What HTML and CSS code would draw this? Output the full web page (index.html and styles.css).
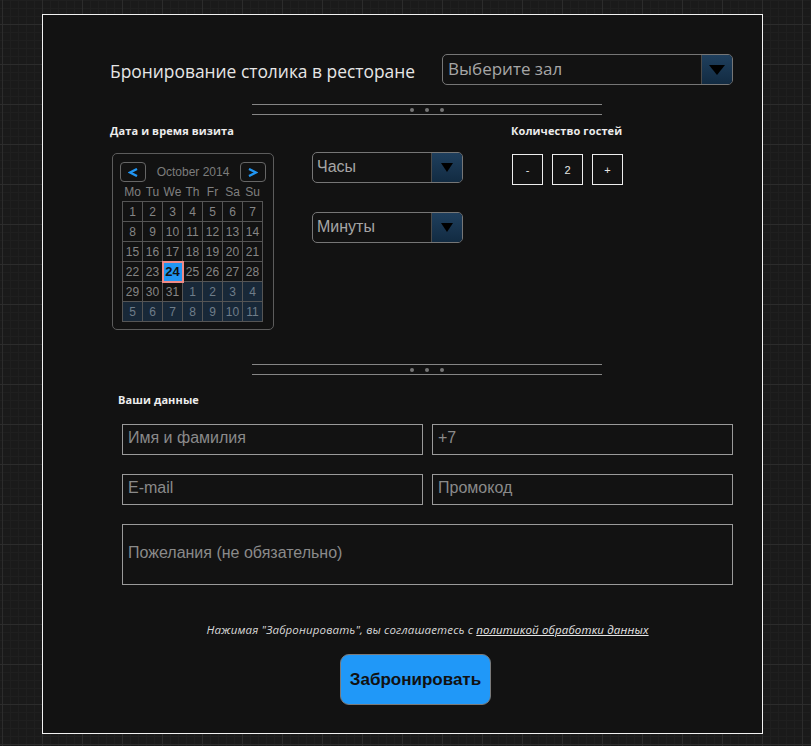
FILE: index.html
```html
<!DOCTYPE html>
<html lang="ru">
<head>
<meta charset="utf-8">
<title>Бронирование столика</title>
<link rel="stylesheet" href="styles.css">
</head>
<body>
<div class="panel">
  <div class="header">
    <h1 class="title">Бронирование столика в ресторане</h1>
    <div class="select select-hall">
      <span class="select-text">Выберите зал</span>
      <span class="select-arrow"><svg width="16" height="10" viewBox="0 0 16 10"><polygon points="0,0 16,0 8,10" fill="#000"/></svg></span>
    </div>
  </div>

  <div class="sep"><i></i><i></i><i></i></div>

  <div class="visit">
    <div class="col col-date">
      <div class="label">Дата и время визита</div>
      <div class="calendar">
        <div class="cal-head">
          <span class="cal-nav"><svg width="10" height="9" viewBox="0 0 10 9"><polyline points="9,1 2,4.5 9,8" fill="none" stroke="#2196f3" stroke-width="2.4" stroke-linejoin="miter"/></svg></span>
          <span class="cal-month">October 2014</span>
          <span class="cal-nav"><svg width="10" height="9" viewBox="0 0 10 9"><polyline points="1,1 8,4.5 1,8" fill="none" stroke="#2196f3" stroke-width="2.4" stroke-linejoin="miter"/></svg></span>
        </div>
        <table class="cal-table">
          <thead>
            <tr><th>Mo</th><th>Tu</th><th>We</th><th>Th</th><th>Fr</th><th>Sa</th><th>Su</th></tr>
          </thead>
          <tbody>
            <tr><td>1</td><td>2</td><td>3</td><td>4</td><td>5</td><td>6</td><td>7</td></tr>
            <tr><td>8</td><td>9</td><td>10</td><td>11</td><td>12</td><td>13</td><td>14</td></tr>
            <tr><td>15</td><td>16</td><td>17</td><td>18</td><td>19</td><td>20</td><td>21</td></tr>
            <tr><td>22</td><td>23</td><td class="sel">24</td><td>25</td><td>26</td><td>27</td><td>28</td></tr>
            <tr><td>29</td><td>30</td><td>31</td><td class="next">1</td><td class="next">2</td><td class="next">3</td><td class="next">4</td></tr>
            <tr><td class="next">5</td><td class="next">6</td><td class="next">7</td><td class="next">8</td><td class="next">9</td><td class="next">10</td><td class="next">11</td></tr>
          </tbody>
        </table>
      </div>
    </div>
    <div class="col col-time">
      <div class="select select-small">
        <span class="select-text plain">Часы</span>
        <span class="select-arrow"><svg width="12" height="9" viewBox="0 0 12 9"><polygon points="0,0 12,0 6,9" fill="#000"/></svg></span>
      </div>
      <div class="select select-small minutes">
        <span class="select-text plain">Минуты</span>
        <span class="select-arrow"><svg width="12" height="9" viewBox="0 0 12 9"><polygon points="0,0 12,0 6,9" fill="#000"/></svg></span>
      </div>
    </div>
    <div class="col col-guests">
      <div class="label">Количество гостей</div>
      <div class="counter">
        <span class="cbox">-</span>
        <span class="cbox">2</span>
        <span class="cbox">+</span>
      </div>
    </div>
  </div>

  <div class="sep sep-second"><i></i><i></i><i></i></div>

  <div class="data">
    <div class="label label-data">Ваши данные</div>
    <form class="form">
      <div class="fields">
        <input class="field" type="text" placeholder="Имя и фамилия">
        <input class="field" type="text" placeholder="+7">
        <input class="field" type="text" placeholder="E-mail">
        <input class="field" type="text" placeholder="Промокод">
      </div>
      <textarea class="wishes" placeholder="Пожелания (не обязательно)"></textarea>
      <p class="agree">Нажимая "Забронировать", вы соглашаетесь с <a href="#">политикой обработки данных</a></p>
      <button class="submit" type="button">Забронировать</button>
    </form>
  </div>
</div>
</body>
</html>
```

FILE: styles.css
```css
html, body {
  margin: 0;
  padding: 0;
}
body {
  width: 811px;
  height: 746px;
  overflow: hidden;
  background-color: #1a1a1a;
  background-image:
    linear-gradient(90deg, #2c2c2c 1px, transparent 1px),
    linear-gradient(180deg, #2c2c2c 1px, transparent 1px),
    linear-gradient(90deg, #1f1f1f 1px, transparent 1px),
    linear-gradient(180deg, #1f1f1f 1px, transparent 1px);
  background-size: 40px 40px, 40px 40px, 8px 8px, 8px 8px;
  background-position: 2px 24px, 2px 24px, 2px 0, 0 0;
  font-family: "Liberation Sans", Arial, sans-serif;
}

.panel {
  box-sizing: border-box;
  width: 721px;
  height: 720px;
  margin: 14px 0 0 42px;
  border: 1px solid #f2f2f2;
  background: #121212;
  padding: 39px 29px 0 67px;
}

.header {
  display: flex;
  justify-content: space-between;
  align-items: center;
  height: 31px;
}
.title {
  margin: 0;
  font-family: "Open Sans", sans-serif;
  font-weight: 400;
  font-size: 17.4px;
  color: #e6e6e6;
  position: relative;
  top: 1px;
}

.select {
  box-sizing: border-box;
  display: flex;
  height: 31px;
  border: 1px solid #767676;
  border-radius: 5px;
  overflow: hidden;
  background: #121212;
}
.select-hall {
  width: 291px;
}
.select-text {
  flex: 1;
  display: flex;
  align-items: center;
  padding-left: 5px;
  padding-bottom: 3px;
  font-family: "Open Sans", sans-serif;
  font-size: 17px;
  color: #a6a6a6;
}
.select-text.plain {
  font-family: "Liberation Sans", Arial, sans-serif;
  font-size: 16px;
  padding-left: 4px;
  padding-bottom: 1px;
}
.select-arrow {
  width: 30px;
  display: flex;
  align-items: center;
  justify-content: center;
  border-left: 1px solid #4a4a4a;
  background: linear-gradient(180deg, #1f3f5d 0%, #122b42 100%);
}

.sep {
  box-sizing: border-box;
  width: 350px;
  height: 11px;
  margin: 19px 0 0 142px;
  border-top: 1px solid #858585;
  border-bottom: 1px solid #858585;
  display: flex;
  justify-content: center;
  align-items: center;
  gap: 11px;
}
.sep i {
  display: block;
  width: 4px;
  height: 4px;
  border-radius: 50%;
  background: #777;
}
.sep-second {
  margin-top: 34px;
}

.label {
  font-family: "Open Sans", sans-serif;
  font-weight: 700;
  font-size: 11px;
  letter-spacing: 0.1px;
  line-height: 14px;
  color: #ececec;
}

.visit {
  display: flex;
  padding-top: 9px;
}
.col-date {
  width: 202px;
}
.col-time {
  width: 199px;
  padding-top: 28px;
}
.col-guests {
  flex: 1;
}

.calendar {
  box-sizing: border-box;
  width: 162px;
  margin: 15px 0 0 2px;
  border: 1px solid #5c5c5c;
  border-radius: 5px;
  padding: 8px 9px 7px 9px;
}
.cal-head {
  display: flex;
  justify-content: space-between;
  align-items: center;
  margin: 0 -2px;
  height: 20px;
}
.cal-nav {
  box-sizing: border-box;
  width: 26px;
  height: 20px;
  border: 1px solid #666;
  border-radius: 4px;
  display: flex;
  align-items: center;
  justify-content: center;
}
.cal-month {
  font-size: 12px;
  color: #7c7c7c;
}
.cal-table {
  border-collapse: collapse;
  margin-top: 1px;
}
.cal-table th {
  height: 18px;
  width: 20px;
  padding: 0;
  font-weight: 400;
  font-size: 12px;
  color: #808080;
  text-align: center;
  vertical-align: middle;
}
.cal-table td {
  box-sizing: border-box;
  width: 20px;
  height: 20px;
  padding: 0;
  border: 1px solid #555;
  font-size: 12px;
  color: #858585;
  text-align: center;
  vertical-align: middle;
}
.cal-table td.next {
  background: #182838;
  color: #6f7d89;
}
.cal-table td.sel {
  background: #2196f3;
  outline: 2px solid #f08a86;
  outline-offset: -1px;
  color: #111;
  font-weight: 700;
  font-size: 13px;
}

.select-small {
  width: 151px;
}
.minutes {
  margin-top: 29px;
}

.counter {
  display: flex;
  gap: 9px;
  margin-top: 16px;
  margin-left: 1px;
}
.cbox {
  box-sizing: border-box;
  width: 31px;
  height: 31px;
  border: 1px solid #ededed;
  display: flex;
  align-items: center;
  justify-content: center;
  font-size: 11px;
  color: #e6e6e6;
}

.data {
  padding-top: 18px;
}
.label-data {
  margin-left: 8px;
}
.form {
  width: 611px;
  margin: 17px 0 0 12px;
}
.fields {
  display: grid;
  grid-template-columns: 301px 301px;
  column-gap: 9px;
  row-gap: 19px;
}
.field {
  box-sizing: border-box;
  height: 31px;
  margin: 0;
  border: 1px solid #9a9a9a;
  border-radius: 0;
  background: transparent;
  padding: 0 5px 3px 5px;
  font-family: "Liberation Sans", Arial, sans-serif;
  font-size: 16px;
  color: #ccc;
  outline: none;
}
.field::placeholder,
.wishes::placeholder {
  color: #8a8a8a;
  opacity: 1;
}
.wishes {
  display: block;
  box-sizing: border-box;
  width: 611px;
  height: 61px;
  margin: 19px 0 0 0;
  border: 1px solid #9a9a9a;
  border-radius: 0;
  background: transparent;
  padding: 19px 5px 0 5px;
  font-family: "Liberation Sans", Arial, sans-serif;
  font-size: 16px;
  line-height: 18px;
  color: #ccc;
  resize: none;
  outline: none;
}
.agree {
  margin: 38px 0 0 0;
  text-align: center;
  font-family: "Open Sans", sans-serif;
  font-style: italic;
  font-size: 11.5px;
  letter-spacing: 0.15px;
  line-height: 14px;
  color: #d8d8d8;
}
.agree a {
  color: #e6e6e6;
  text-decoration: underline;
}
.submit {
  display: block;
  box-sizing: border-box;
  width: 151px;
  height: 51px;
  margin: 17px 0 0 218px;
  padding: 0;
  border: 1px solid #7a7a7a;
  border-radius: 9px;
  background: #2098f8;
  font-family: "Liberation Sans", Arial, sans-serif;
  font-weight: 700;
  font-size: 17px;
  color: #111;
  cursor: pointer;
}
```
